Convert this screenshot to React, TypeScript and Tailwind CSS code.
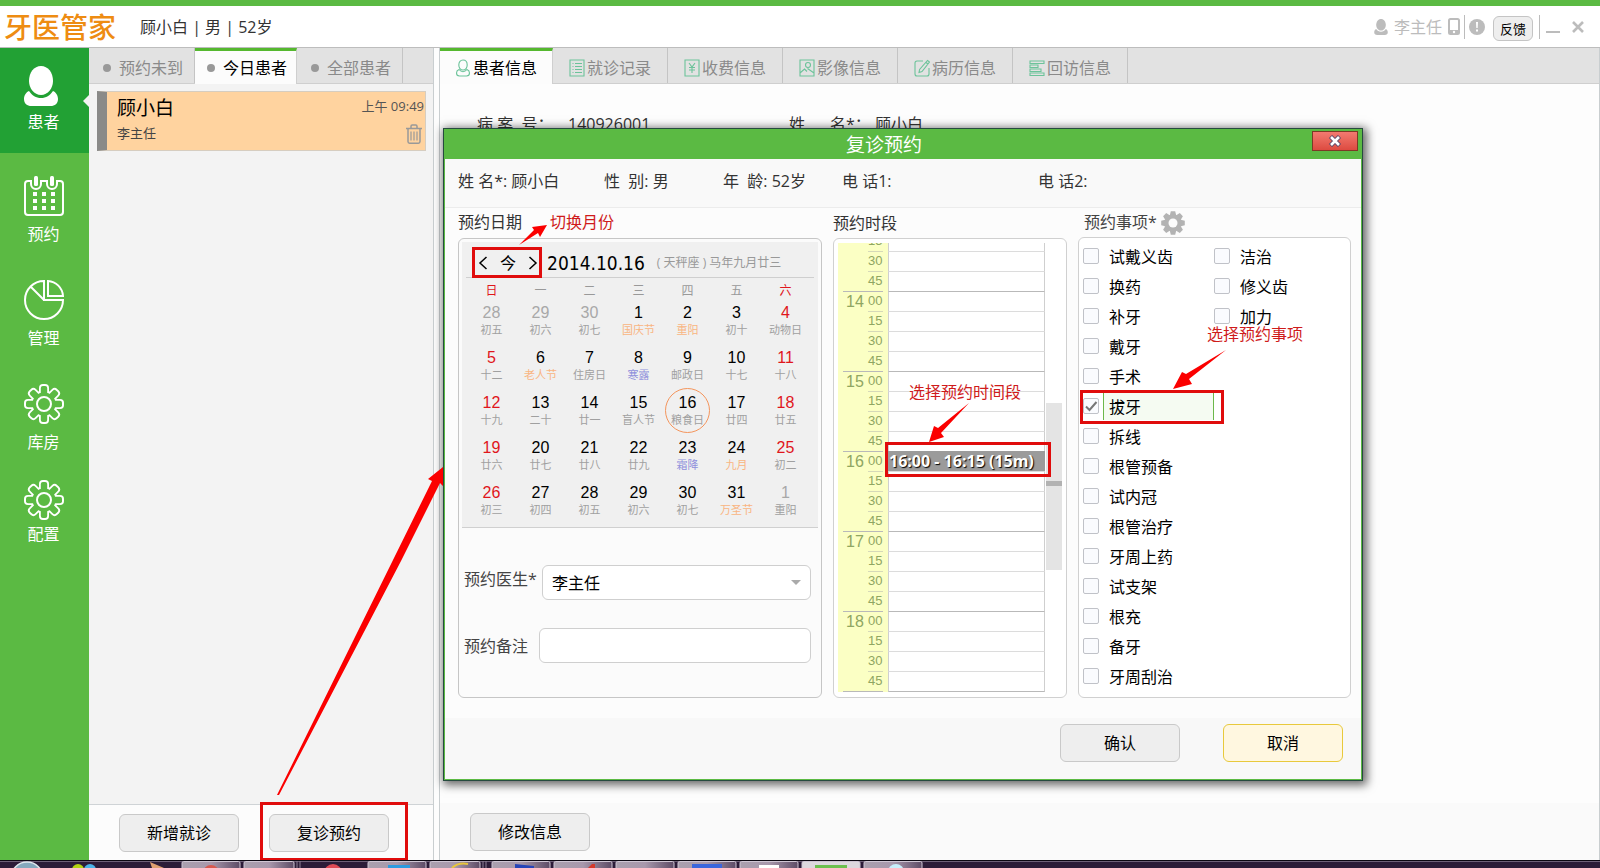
import React, { useState } from 'react';

type Tone = 'muted' | 'red' | 'normal';

interface Day {
  num: number;
  note: string;
  tone?: Tone;
  noteTone?: 'festival' | 'term';
}

const NUM_TONES: Record<Tone, string> = {
  muted: 'text-[#a8a8a8]',
  red: 'text-[#e0161c]',
  normal: 'text-black',
};

const NOTE_TONES = {
  festival: 'text-[#f9b582]',
  term: 'text-[#8f90dc]',
};

const WEEKS: Day[][] = [
  [
    { num: 28, note: '初五', tone: 'muted' },
    { num: 29, note: '初六', tone: 'muted' },
    { num: 30, note: '初七', tone: 'muted' },
    { num: 1, note: '国庆节', noteTone: 'festival' },
    { num: 2, note: '重阳', noteTone: 'festival' },
    { num: 3, note: '初十' },
    { num: 4, note: '动物日', tone: 'red' },
  ],
  [
    { num: 5, note: '十二', tone: 'red' },
    { num: 6, note: '老人节', noteTone: 'festival' },
    { num: 7, note: '住房日' },
    { num: 8, note: '寒露', noteTone: 'term' },
    { num: 9, note: '邮政日' },
    { num: 10, note: '十七' },
    { num: 11, note: '十八', tone: 'red' },
  ],
  [
    { num: 12, note: '十九', tone: 'red' },
    { num: 13, note: '二十' },
    { num: 14, note: '廿一' },
    { num: 15, note: '盲人节' },
    { num: 16, note: '粮食日' },
    { num: 17, note: '廿四' },
    { num: 18, note: '廿五', tone: 'red' },
  ],
  [
    { num: 19, note: '廿六', tone: 'red' },
    { num: 20, note: '廿七' },
    { num: 21, note: '廿八' },
    { num: 22, note: '廿九' },
    { num: 23, note: '霜降', noteTone: 'term' },
    { num: 24, note: '九月', noteTone: 'festival' },
    { num: 25, note: '初二', tone: 'red' },
  ],
  [
    { num: 26, note: '初三', tone: 'red' },
    { num: 27, note: '初四' },
    { num: 28, note: '初五' },
    { num: 29, note: '初六' },
    { num: 30, note: '初七' },
    { num: 31, note: '万圣节', noteTone: 'festival' },
    { num: 1, note: '重阳', tone: 'muted' },
  ],
];

const ITEMS_LEFT = [
  '试戴义齿', '换药', '补牙', '戴牙', '手术', '拔牙', '拆线', '根管预备',
  '试内冠', '根管治疗', '牙周上药', '试支架', '根充', '备牙', '牙周刮治',
];
const ITEMS_RIGHT = ['洁治', '修义齿', '加力'];

// Quarter-hour slots from 13:15 to 18:45
const SLOTS = Array.from({ length: 23 }, (_, i) => {
  const total = 13 * 60 + 15 + i * 15;
  return { hour: Math.floor(total / 60), minute: total % 60 };
});

const BUTTON = 'h-[38px] w-[120px] rounded-md border border-[#c9c9c9] bg-[#eeeeee] text-base leading-5 text-black';

/* ---------- icons ---------- */

const PersonIcon = ({ className }: { className: string }) => (
  <svg className={className} viewBox="0 0 34 40" fill="currentColor">
    <path d="M17 0c7 0 12 6.500 12 15 0 7.500-5.200 14-12 14S5 22.500 5 15C5 6.500 10 0 17 0z" />
    <path d="M5 25c3 4.600 7 7 12 7s9-2.400 12-7c3 1.200 5 4.500 5 8 0 4.500-3 7-7.500 7h-19C3 40 0 37.500 0 33c0-3.500 2-6.800 5-8z" />
  </svg>
);

const CalendarIcon = () => (
  <svg className="size-10" viewBox="0 0 40 40" fill="none" stroke="#fff" strokeWidth="2">
    <path d="M7 5H4a3 3 0 0 0-3 3v28a3 3 0 0 0 3 3h32a3 3 0 0 0 3-3V8a3 3 0 0 0-3-3h-3v3a5 5 0 0 1-10 0V5h-6v3a5 5 0 0 1-10 0V5z" />
    <g fill="#fff" stroke="none">
      <rect x="10" y="0" width="4" height="10" rx="1.500" />
      <rect x="26" y="0" width="4" height="10" rx="1.500" />
      {[16, 23, 30].map(y => [9, 18, 27].map(x => <rect key={`${x}-${y}`} x={x} y={y} width="4" height="4" />))}
    </g>
  </svg>
);

const PieIcon = () => (
  <svg className="size-10" viewBox="0 0 40 40" fill="none" stroke="#fff" strokeWidth="2">
    <path d="M20 1A19 19 0 1 0 39 20H20V1zM20 20 7 7" />
    <path d="M24 1v15h15A16 16 0 0 0 24 1z" />
  </svg>
);

const TEETH = [0, 45, 90, 135];

const GearIcon = () => (
  <svg className="size-10" viewBox="-20 -20 40 40">
    <g fill="#fff">
      {TEETH.map(a => <rect key={a} x="-5" y="-20" width="10" height="40" rx="4" transform={`rotate(${a})`} />)}
      <circle r="13.500" />
    </g>
    <g fill="#5bba43">
      {TEETH.map(a => <rect key={a} x="-3.200" y="-18" width="6.400" height="36" rx="2" transform={`rotate(${a})`} />)}
      <circle r="11.500" />
    </g>
    <circle r="7" fill="none" stroke="#fff" strokeWidth="2" />
  </svg>
);

const SolidGear = () => (
  <svg className="size-6" viewBox="-12 -12 24 24" fill="#b3b3b3">
    {TEETH.map(a => <path key={a} d="M-2.200-11.800h4.400l1 4v15.600l-1 4h-4.400l-1-4V-7.800z" transform={`rotate(${a})`} />)}
    <circle r="8.500" />
    <circle r="4.500" fill="#fcfcfc" />
  </svg>
);

const TrashIcon = () => (
  <svg className="h-5 w-4" viewBox="0 0 16 20" fill="none" stroke="#999" strokeWidth="1.500">
    <path d="M0 4.500h16M5 4V2.200C5 1.400 5.500 1 6.200 1h3.600c.7 0 1.200.4 1.200 1.200V4M2 5v12.500c0 1 .6 1.700 1.600 1.700h8.800c1 0 1.600-.7 1.600-1.700V5" />
    <path d="M5 7.500v9M8 7.500v9M11 7.500v9" strokeWidth="1.200" />
  </svg>
);

const tabIconPaths: Record<string, React.ReactNode> = {
  person: <path d="M8 1c2.600 0 4.200 2.200 4.200 5S10.500 11 8 11 3.800 8.800 3.800 6 5.400 1 8 1zM4 10.500c-1.600.7-2.500 2-2.500 3.500 0 1.800 1.200 3 3 3h7c1.800 0 3-1.200 3-3 0-1.500-.9-2.800-2.500-3.500-2.500 3-5.500 3-8 0z" />,
  list: <path d="M1 1h14v16H1zM3.500 4.500h1M6 4.500h7M3.500 7.500h1M6 7.500h7M3.500 10.500h1M6 10.500h7M3.500 13.500h1M6 13.500h7" />,
  yen: <path d="M1 1h14v16H1zM5 4l3 4 3-4M8 8v6M5 8.500h6M5 11h6" />,
  image: (
    <>
      <path d="M1 1h14v16H1zM1 14l4.500-4 2.500 2.500M8.500 9.500l6.500 4.500" />
      <circle cx="9" cy="6" r="2.500" />
    </>
  ),
  edit: <path d="M9 2H3a2 2 0 0 0-2 2v11a2 2 0 0 0 2 2h10a2 2 0 0 0 2-2V9M13.500 1.500l2 1.500-7.500 9.500-3 1 .6-3zM12 3.500l2 1.500" />,
  lines: <path d="M1 2h14v2.500H1zM1 6h8v2.500H1zM1 10h11v2.500H1zM1 14h14v2.500H1z" />,
};

const TabIcon = ({ name }: { name: string }) => (
  <svg className="h-[18px] w-4" viewBox="0 0 16 18" fill="none" stroke="#6cc39a" strokeWidth="1.100">
    {tabIconPaths[name]}
  </svg>
);

/* ---------- header and navigation ---------- */

const TopBar = () => (
  <header className="flex h-12 shrink-0 items-center border-t-[6px] border-b border-t-[#5bba43] border-b-[#bdbdbd] bg-white pr-4 pl-1">
    <h1 className="text-[28px] leading-8 font-medium text-[#ee8c12]">牙医管家</h1>
    <p className="ml-6 text-base leading-5 text-[#333]">顾小白 | 男 | 52岁</p>
    <div className="ml-auto flex items-center text-[#bcbcbc]">
      <PersonIcon className="h-4 w-[14px]" />
      <span className="ml-1.5 text-base leading-5">李主任</span>
      <svg className="ml-1.5 h-[17px] w-3" viewBox="0 0 12 17">
        <rect x="1" y="1" width="10" height="15" rx="1.500" fill="none" stroke="currentColor" strokeWidth="2" />
        <path d="M1 12h10v4H1z" fill="currentColor" />
        <circle cx="6" cy="14" r="1.200" fill="#fff" />
      </svg>
      <span className="mx-1 h-6 w-px bg-[#bcbcbc]" />
      <svg className="size-4" viewBox="0 0 16 16">
        <circle cx="8" cy="8" r="8" fill="currentColor" />
        <path d="M7 3h2l-.3 6H7.300zM7 10.500h2v2H7z" fill="#fff" />
      </svg>
      <button className="mt-1 ml-2 h-[25px] w-10 rounded-md border border-[#c4c4c4] bg-[#eeeeee] text-[13px] leading-5 text-black">反馈</button>
      <span className="mx-1.5 h-6 w-px bg-[#bcbcbc]" />
      <button aria-label="最小化" className="flex h-4 w-3.5 items-end pb-0.5">
        <span className="h-0.5 w-full bg-[#bcbcbc]" />
      </button>
      <button aria-label="关闭" className="ml-3">
        <svg className="size-3" viewBox="0 0 12 12" stroke="currentColor" strokeWidth="2.600">
          <path d="M1 1l10 10M11 1 1 11" />
        </svg>
      </button>
    </div>
  </header>
);

const SideNav = () => (
  <nav className="flex w-[89px] shrink-0 flex-col bg-[#5bba43] text-base leading-5 text-white">
    <button className="relative flex flex-col items-center bg-[#22a134] pt-[18px] pr-0.5 pb-[21px]">
      <span className="w-10"><PersonIcon className="h-10 w-[34px]" /></span>
      <span className="mt-1.5">患者</span>
      <svg className="absolute top-[47px] right-0 h-3 w-1.5" viewBox="0 0 6 12" fill="#f3f3f3"><path d="M6 0v12L0 6z" /></svg>
    </button>
    <button className="mt-[23px] flex flex-col items-center gap-2 pr-0.5"><CalendarIcon />预约</button>
    <button className="mt-9 flex flex-col items-center gap-2 pr-0.5"><PieIcon />管理</button>
    <button className="mt-9 flex flex-col items-center gap-2 pr-0.5"><GearIcon />库房</button>
    <button className="mt-7 flex flex-col items-center gap-1 pr-0.5"><GearIcon />配置</button>
  </nav>
);

const LEFT_TABS = ['预约未到', '今日患者', '全部患者'];

const PatientList = () => {
  const [active, setActive] = useState('今日患者');
  return (
    <section className="flex w-[345px] shrink-0 flex-col border-r border-[#c9ced0] bg-[#f3f3f3]">
      <div className="flex h-9 border-b border-[#cfcfcf] bg-[#e2e2e2]">
        {LEFT_TABS.map(tab => (
          <button
            key={tab}
            onClick={() => setActive(tab)}
            className={
              tab === active
                ? '-mb-px flex w-[102px] items-center gap-2 border-t-[3px] border-r border-t-[#55b82f] border-r-[#cfcfcf] bg-[#fcfcfc] pl-3 text-base leading-5 text-black'
                : 'flex w-[106px] items-center gap-2 border-r border-[#c4c4c4] pt-1 pl-3.5 text-base leading-5 text-[#8a8a8a]'
            }
          >
            <span className="size-2 rounded-full bg-[#999]" />
            {tab}
          </button>
        ))}
      </div>
      <div className="flex-1 pt-[7px] pr-[7px] pl-2">
        <article className="flex h-[60px] justify-between border border-l-[10px] border-[#d6cdc0] border-l-[#8a8a88] bg-[#ffd39f] pl-2.5">
          <div>
            <h2 className="mt-1 text-[19px] leading-6 text-black">顾小白</h2>
            <p className="mt-[3px] text-[13px] leading-5 text-[#444]">李主任</p>
          </div>
          <div className="flex flex-col items-end pr-px">
            <time className="mt-1 text-[13px] leading-5 text-[#555]">上午 09:49</time>
            <button aria-label="删除" className="mt-2 mr-0.5"><TrashIcon /></button>
          </div>
        </article>
      </div>
      <footer className="flex h-14 items-center gap-[30px] border-t border-[#cfd3d6] bg-[#fcfcfc] pl-[30px]">
        <button className={BUTTON}>新增就诊</button>
        <button className={BUTTON}>复诊预约</button>
      </footer>
    </section>
  );
};

const MAIN_TABS = [
  { label: '患者信息', icon: 'person' },
  { label: '就诊记录', icon: 'list' },
  { label: '收费信息', icon: 'yen' },
  { label: '影像信息', icon: 'image' },
  { label: '病历信息', icon: 'edit' },
  { label: '回访信息', icon: 'lines' },
];

const PatientDetail = () => {
  const [active, setActive] = useState('患者信息');
  return (
    <main className="ml-[5px] flex min-w-0 flex-1 flex-col border-x border-[#c9ced0] bg-[#fdfdfd]">
      <div className="flex h-9 border-b border-[#cfcfcf] bg-[#e2e2e2]">
        {MAIN_TABS.map(tab => (
          <button
            key={tab.label}
            onClick={() => setActive(tab.label)}
            className={
              tab.label === active
                ? '-mb-px flex w-[113px] items-center gap-0.5 border-t-[3px] border-r border-t-[#55b82f] border-r-[#cfcfcf] bg-[#fcfcfc] pl-[15px] text-base leading-5 text-black'
                : 'flex w-[115px] items-center gap-0.5 border-r border-[#c4c4c4] pt-1 pl-4 text-base leading-5 text-[#8a8a8a]'
            }
          >
            <TabIcon name={tab.icon} />
            {tab.label}
          </button>
        ))}
      </div>
      <dl className="flex flex-1 pt-[30px] pl-[37px] text-base leading-5 whitespace-pre text-[#333]">
        <dt className="w-[91px]">病 案  号：</dt>
        <dd className="w-[221px]">140926001</dd>
        <dt className="w-[86px]">姓      名*：</dt>
        <dd>顾小白</dd>
      </dl>
      <footer className="flex h-[57px] items-center bg-[#fafafa] pl-[30px]">
        <button className={BUTTON}>修改信息</button>
      </footer>
    </main>
  );
};

/* ---------- appointment dialog ---------- */

const Calendar = () => (
  <div className="border-b border-[#d0d0d0] bg-[#f0f0f0] px-1 pt-1.5">
    <div className="relative flex h-[30px] items-center border-b border-[#cfcfcf] pl-3">
      <button aria-label="上个月">
        <svg className="h-3.5 w-2.5" viewBox="0 0 10 14" fill="none" stroke="#000" strokeWidth="1.500"><path d="M8.500 1 2 7l6.500 6" /></svg>
      </button>
      <button className="mx-3 text-base leading-5">今</button>
      <button aria-label="下个月">
        <svg className="h-3.5 w-2.5" viewBox="0 0 10 14" fill="none" stroke="#000" strokeWidth="1.500"><path d="M1.500 1 8 7l-6.500 6" /></svg>
      </button>
      <span className="ml-[9px] font-['DejaVu_Sans_Condensed','DejaVu_Sans',sans-serif] text-[19px] leading-6">2014.10.16</span>
      <span className="ml-3 text-xs leading-5 whitespace-pre text-[#999]">( 天秤座 ) 马年九月廿三</span>
      <span className="absolute -top-px left-1.5 h-[31px] w-[70px] border-3 border-[#e00c0c]" />
    </div>
    <table className="ml-px w-[343px] table-fixed text-center">
      <thead>
        <tr className="h-[25px] text-xs leading-5">
          {['日', '一', '二', '三', '四', '五', '六'].map((d, i) => (
            <th key={d} className={i === 0 || i === 6 ? 'font-normal text-[#e0161c]' : 'font-normal text-[#999]'}>{d}</th>
          ))}
        </tr>
      </thead>
      <tbody>
        {WEEKS.map((week, w) => (
          <tr key={w} className="h-[45px] last:h-11">
            {week.map((day, d) => (
              <td key={d} className="relative p-0 align-top">
                <div className={`font-['Liberation_Sans',sans-serif] text-base leading-5 ${NUM_TONES[day.tone ?? 'normal']}`}>{day.num}</div>
                <div className={`text-[11px] leading-[13px] whitespace-nowrap ${day.noteTone ? NOTE_TONES[day.noteTone] : 'text-[#a0a0a0]'}`}>{day.note}</div>
                {w === 2 && d === 4 && (
                  <span className="absolute -top-[5px] left-0.5 size-[45px] rounded-full border border-[#f4955c]" />
                )}
              </td>
            ))}
          </tr>
        ))}
      </tbody>
    </table>
  </div>
);

const DateColumn = () => (
  <section className="flex w-[364px] flex-col">
    <h3 className="h-[30px] pt-1 text-base leading-5 text-[#333]">预约日期</h3>
    <div className="flex-1 rounded-md border border-[#c6c6c6] bg-[#fbfbfb] p-[3px]">
      <Calendar />
      <div className="mt-[37px] flex items-center pr-[7px] pl-0.5">
        <label htmlFor="doctor" className="w-[78px] pb-2 text-base leading-5 text-[#444]">预约医生*</label>
        <div className="relative flex-1">
          <select id="doctor" className="h-[35px] w-full appearance-none rounded-md border border-[#cfcfcf] bg-white px-[9px] text-base leading-5 text-black">
            <option>李主任</option>
          </select>
          <svg className="pointer-events-none absolute top-[15px] right-2.5 h-[5px] w-2.5" viewBox="0 0 10 5" fill="#aaa"><path d="M0 0h10L5 5z" /></svg>
        </div>
      </div>
      <div className="mt-7 flex items-center pr-[7px] pl-0.5">
        <label htmlFor="remark" className="w-[75px] text-base leading-5 text-[#444]">预约备注</label>
        <input id="remark" type="text" className="h-[35px] min-w-0 flex-1 rounded-md border border-[#cfcfcf] bg-white px-2" />
      </div>
    </div>
  </section>
);

const TimeColumn = () => (
  <section className="flex w-[234px] flex-col">
    <h3 className="h-[30px] pt-[5px] text-base leading-5 text-[#333]">预约时段</h3>
    <div className="flex flex-1 rounded-md border border-[#d0d0d0] bg-white p-1">
      <div className="relative h-[450px] w-[207px] overflow-hidden">
        <div className="-mt-[11px] font-['Liberation_Sans',sans-serif]">
          {SLOTS.map(({ hour, minute }) => {
            const last = minute === 45;
            return (
              <div key={`${hour}-${minute}`} className="flex h-5">
                <div className="flex w-[50px] bg-[#fbffc4] pr-[5px] pl-[5px] text-[#8fa662]">
                  <span className={last ? 'w-[25px] border-b border-[#b9b9b9] pl-[3px] text-base leading-5' : 'w-[25px] pl-[3px] text-base leading-5'}>
                    {minute === 0 ? hour : ''}
                  </span>
                  <span className={last ? 'w-[15px] border-b border-[#b9b9b9] text-[13px] leading-[18px]' : 'w-[15px] border-b border-[#d6d9b8] text-[13px] leading-[18px]'}>
                    {minute === 0 ? '00' : minute}
                  </span>
                </div>
                <div className={last ? 'flex-1 border-x border-b border-x-[#cfcfcf] border-b-[#b9b9b9]' : 'flex-1 border-x border-b border-x-[#cfcfcf] border-b-[#dcdcdc]'} />
              </div>
            );
          })}
        </div>
        <div className="absolute top-[208px] right-0 left-[50px] h-5 bg-[#9b9b9b] pl-px text-base leading-5 font-bold whitespace-nowrap text-white [text-shadow:1px_1px_1px_#000]">
          16:00 - 16:15 (15m)
        </div>
      </div>
      <div className="mt-[160px] ml-px h-[167px] w-4 bg-[#e4e4e4] pt-[78px]">
        <div className="h-[5px] bg-[#b2b2b2]" />
      </div>
    </div>
  </section>
);

const CheckItem = ({ id, label }: { id: string; label: string }) => {
  const [checked, setChecked] = useState(label === '拔牙');
  return (
    <li className="flex h-[30px] items-center">
      <span className="relative size-4 shrink-0">
        <input
          id={id}
          type="checkbox"
          checked={checked}
          onChange={e => setChecked(e.target.checked)}
          className="block size-4 appearance-none rounded-xs border border-[#c0c2c8] bg-[#fafbfe]"
        />
        {checked && (
          <svg className="pointer-events-none absolute inset-0 size-4" viewBox="0 0 16 16" fill="none" stroke="#777" strokeWidth="2">
            <path d="M3 8.500 6.500 12 13.500 4" />
          </svg>
        )}
      </span>
      <label
        htmlFor={id}
        className={
          checked
            ? 'ml-1 h-7 w-[111px] border-x border-[#6cb84a] bg-[#f5fbf2] pl-[5px] text-base leading-[30px] text-black'
            : 'ml-1 h-7 w-[111px] pl-1.5 text-base leading-[30px] text-black'
        }
      >
        {label}
      </label>
    </li>
  );
};

const ItemColumn = () => (
  <section className="flex flex-1 flex-col">
    <div className="flex h-[29px] items-center gap-1 pl-1.5">
      <h3 className="pb-0.5 text-base leading-5 text-[#444]">预约事项*</h3>
      <button aria-label="设置"><SolidGear /></button>
    </div>
    <div className="flex flex-1 rounded-md border border-[#d0d0d0] bg-white px-1 pt-[3px]">
      <ul>
        {ITEMS_LEFT.map((label, i) => <CheckItem key={label} id={`left-${i}`} label={label} />)}
      </ul>
      <ul>
        {ITEMS_RIGHT.map((label, i) => <CheckItem key={label} id={`right-${i}`} label={label} />)}
      </ul>
    </div>
  </section>
);

const AppointmentDialog = () => (
  <div role="dialog" aria-label="复诊预约" className="absolute top-[128px] left-[443px] w-[920px] border border-[#264b3f] bg-[#fcfcfc] shadow-[2px_2px_9px_2px_rgba(0,0,0,0.600)]">
    <div className="border border-[#5bba43]">
      <div className="relative flex h-[29px] items-center justify-center bg-[#5bba43] pr-[38px]">
        <h2 className="text-[19px] leading-6 text-white">复诊预约</h2>
        <button aria-label="关闭" className="absolute top-px right-[3px] flex h-5 w-[46px] items-center justify-center border border-[#7c3a26] bg-gradient-to-b from-[#f27a70] to-[#dd4a40]">
          <svg className="h-3 w-3.5" viewBox="0 0 14 12">
            <path d="M2.500 1.500l9 9M11.500 1.500l-9 9" stroke="#5c4a6a" strokeWidth="4.500" />
            <path d="M3 2l8 8M11 2l-8 8" stroke="#fff" strokeWidth="2.600" />
          </svg>
        </button>
      </div>
      <div className="flex h-[49px] items-center border-b border-[#ececec] bg-[#f9f9f9] pb-1 pl-[13px] text-base leading-5 whitespace-pre text-[#333]">
        <span className="w-[146px]">姓 名*: 顾小白</span>
        <span className="w-[119px]">性  别: 男</span>
        <span className="w-[119px]">年  龄: 52岁</span>
        <span className="w-[196px]">电 话1:</span>
        <span>电 话2:</span>
      </div>
      <div className="flex gap-[11px] pr-2.5 pb-5 pl-[13px]">
        <DateColumn />
        <TimeColumn />
        <ItemColumn />
      </div>
      <div className="flex h-[61px] items-start justify-end gap-[43px] bg-[#f8f8f8] pt-1.5 pr-[18px]">
        <button className={BUTTON}>确认</button>
        <button className="h-[38px] w-[120px] rounded-md border border-[#e8c93c] bg-[#fff7e0] text-base leading-5 text-black">取消</button>
      </div>
    </div>
  </div>
);

/* ---------- tutorial marks ---------- */

const Marks = () => (
  <div className="pointer-events-none absolute inset-0 text-base leading-5 text-[#cf1b1b]">
    <svg className="absolute top-0 left-0 h-[860px] w-[1360px]" viewBox="0 0 1360 860" fill="#fb0000">
      <path d="M277 795 393 560 432 481l-4-2 15-12v19l-3-3-39 78L279 795z" />
      <path d="M519 245l15-15-2-3 15-2-7 12-2-4z" />
      <path d="M969 403l-31 25-4-2-5 16 15-5-3-4z" />
      <path d="M1226 350l-40 24-4-2-9 17 19-5-3-5z" />
      <g fill="none" stroke="#e00c0c" strokeWidth="3">
        <rect x="261.500" y="803.500" width="145" height="56" />
        <rect x="886.500" y="443.500" width="163" height="32" />
        <rect x="1081.500" y="391.500" width="141" height="31" />
      </g>
    </svg>
    <span className="absolute top-[212px] left-[550px]">切换月份</span>
    <span className="absolute top-[382px] left-[909px]">选择预约时间段</span>
    <span className="absolute top-[324px] left-[1207px]">选择预约事项</span>
  </div>
);

/* ---------- desktop task bar ---------- */

const TASKS = [182, 244, 368, 430, 492, 554, 616, 678, 740, 802, 864];

const TaskBar = () => (
  <div className="h-2 shrink-0 overflow-hidden bg-[#2c1c38]">
    <svg className="h-2 w-[1600px]" viewBox="0 0 1600 8">
      <defs>
        <linearGradient id="task" x1="0" x2="1">
          <stop offset="0" stopColor="#aaa0ae" />
          <stop offset="0.500" stopColor="#a898ac" />
          <stop offset="1" stopColor="#5e4c66" />
        </linearGradient>
      </defs>
      <path d="M0 0h1600v1H0z" fill="#0c0812" />
      <path d="M0 1h1600v1H0z" fill="#6e6078" />
      <circle cx="27" cy="18" r="16" fill="#86a9bd" stroke="#dfe8ee" strokeWidth="1.500" />
      <circle cx="78" cy="10" r="6" fill="#b4d411" />
      <circle cx="90" cy="10" r="6" fill="#4bb4e8" />
      <path d="M150 2l14 6h-12z" fill="#e0a070" />
      {TASKS.map(x => (
        <rect key={x} x={x} y="1.500" width={x === 244 || x === 430 ? 50 : 58} height="10" rx="1.500" fill={x === 802 ? '#ddd8de' : 'url(#task)'} stroke="#cfc6d4" />
      ))}
      <path d="M297 1v7M300 1v7M483 1v7M486 1v7" stroke="#8d8096" />
      <circle cx="211" cy="13" r="8" fill="#d8594f" />
      <circle cx="333" cy="13" r="9" fill="#e04a55" />
      <path d="M388 5h22v3h-22z" fill="#2d9be0" />
      <path d="M452 8c4-4 10-5 16-4" stroke="#e8c63c" strokeWidth="2" fill="none" />
      <path d="M515 4l19 2v2h-19z" fill="#2744b8" />
      <path d="M588 8l4-4h3v4z" fill="#d43a2c" />
      <path d="M692 4h30v4h-30z" fill="#3b66dd" />
      <path d="M759 5h20v3h-20z" fill="#fff" />
      <path d="M815 5h32v3h-32z" fill="#6cc04f" />
      <circle cx="896" cy="12" r="8" fill="#c8eefa" />
    </svg>
  </div>
);

const App: React.FC = () => {
  return (
    <div className="relative flex min-h-screen flex-col overflow-hidden bg-[#fdfdfd] font-['Open_Sans','Noto_Sans_CJK_SC',sans-serif]">
      <TopBar />
      <div className="flex flex-1">
        <SideNav />
        <PatientList />
        <PatientDetail />
      </div>
      <TaskBar />
      <AppointmentDialog />
      <Marks />
    </div>
  );
};

export default App;
